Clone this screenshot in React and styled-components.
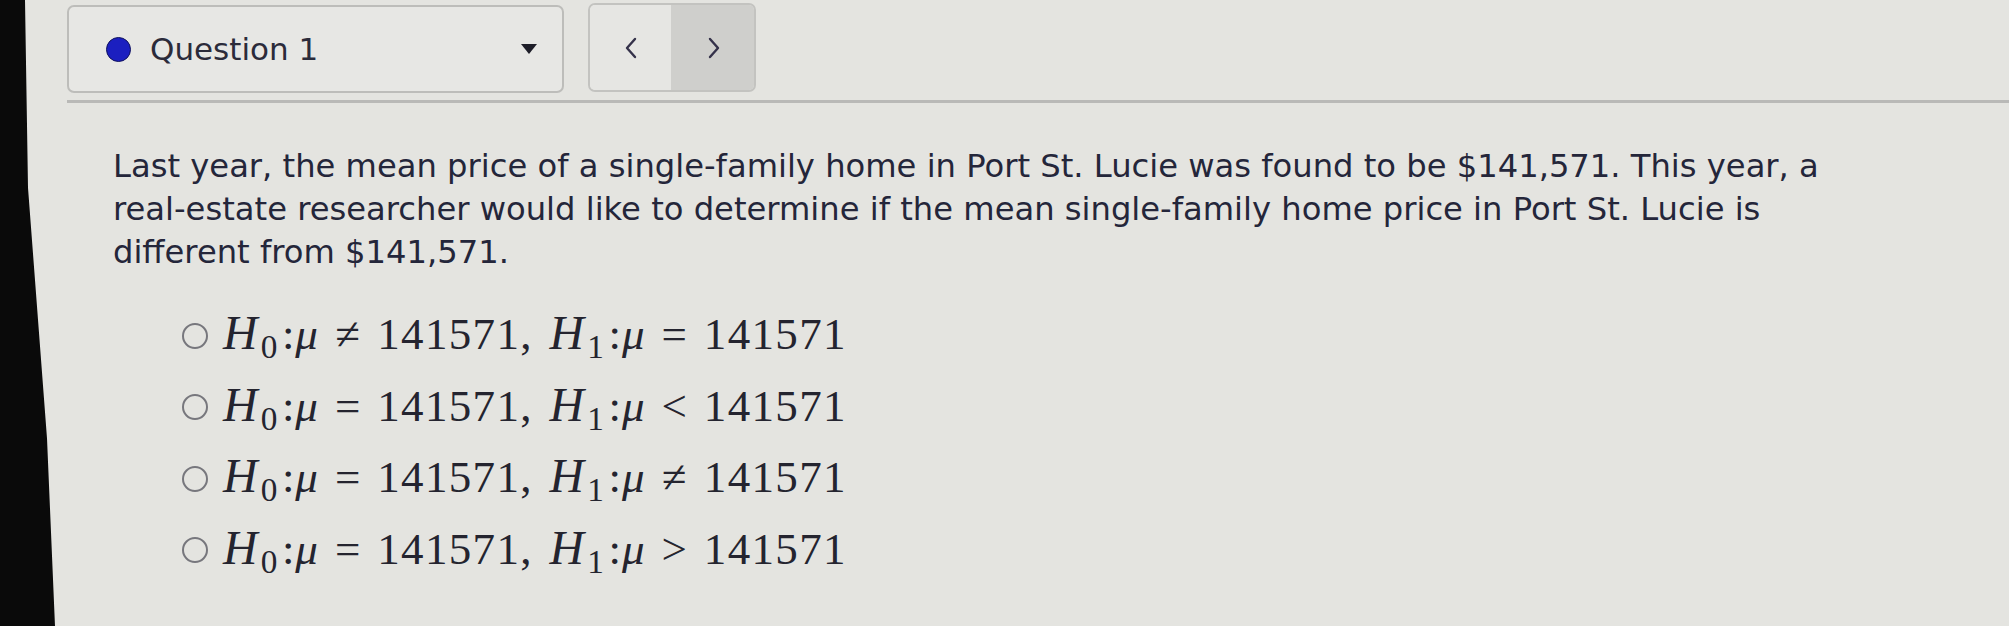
import React from "react";
import styled, { createGlobalStyle } from "styled-components";

const Global = createGlobalStyle`
  html, body { margin: 0; padding: 0; background: #e4e4e0; }
  #root { width: 2009px; height: 626px; }
`;

const Screen = styled.div`
  display: flex;
  width: 2009px;
  height: 626px;
  overflow: hidden;
  background: #e4e4e0;
`;

const Bezel = styled.div`
  flex: 0 0 55px;
  background: #0a0a0a;
  clip-path: polygon(0 0, 25px 0, 28px 30%, 47px 70%, 55px 100%, 0 100%);
`;

const Main = styled.div`
  flex: 1;
  display: flex;
  flex-direction: column;
  padding-left: 12px;
`;

const Header = styled.div`
  display: flex;
  align-items: flex-start;
  gap: 24px;
  padding-top: 5px;
`;

const Dropdown = styled.div`
  box-sizing: border-box;
  width: 497px;
  height: 88px;
  border: 2px solid #bdbdba;
  border-radius: 7px;
  background: #e7e7e4;
  display: flex;
  align-items: center;
  padding: 0 24px 0 37px;
`;

const Dot = styled.span`
  width: 25px;
  height: 25px;
  border-radius: 50%;
  background: #1b1fc0;
  border: 1.5px solid #10125e;
  box-sizing: border-box;
  flex: none;
`;

const Title = styled.span`
  flex: 1;
  margin-left: 19px;
  font-family: "DejaVu Sans", sans-serif;
  font-size: 31px;
  color: #2b2b3a;
`;

const Nav = styled.div`
  box-sizing: border-box;
  display: flex;
  width: 168px;
  height: 89px;
  margin-top: -2px;
  border: 2px solid #c3c3c0;
  border-radius: 7px;
  overflow: hidden;
`;

const NavButton = styled.div`
  flex: 1;
  display: flex;
  align-items: center;
  justify-content: center;
  background: ${(p) => p.$bg};
  border-left: ${(p) => (p.$divider ? "2px solid #cfcfcc" : "none")};
`;

const Separator = styled.div`
  margin-top: 7px;
  border-top: 3px solid #b9b9b7;
`;

const Prompt = styled.p`
  margin: 42px 0 0 46px;
  font-family: "DejaVu Sans", sans-serif;
  font-size: 32.2px;
  line-height: 43px;
  color: #24263a;
  white-space: nowrap;
`;

const Options = styled.div`
  display: flex;
  flex-direction: column;
  margin: 26px 0 0 115px;
`;

const Option = styled.div`
  display: flex;
  align-items: center;
  height: 71.5px;
  gap: 15px;
`;

const Radio = styled.span`
  box-sizing: border-box;
  width: 26px;
  height: 26px;
  border-radius: 50%;
  border: 2px solid #77777d;
  flex: none;
`;

const MathLine = styled.span`
  font-family: "Liberation Serif", "DejaVu Serif", serif;
  font-size: 45px;
  color: #24242f;
  white-space: nowrap;
`;

const Var = styled.i`
  font-style: italic;
  font-size: ${(p) => p.$size || "1em"};
  margin-right: ${(p) => p.$mr || "0"};
`;

const Sub = styled.span`
  font-size: 0.74em;
  vertical-align: -0.28em;
`;

const Colon = styled.span`
  margin: 0 0.02em 0 0.1em;
`;

const Rel = styled.span`
  display: inline-block;
  width: 0.778em;
  text-align: center;
  margin: 0 0.27em;
`;

const Num = styled.span`
  letter-spacing: 0.03em;
`;

const Quad = styled.span`
  display: inline-block;
  width: 0.4em;
`;

function Hyp({ rel0, rel1 }) {
  return (
    <MathLine>
      <Var $size="1.06em" $mr="0.07em">H</Var>
      <Sub>0</Sub>
      <Colon>:</Colon>
      <Var>μ</Var>
      <Rel>{rel0}</Rel>
      <Num>141571</Num>,
      <Quad />
      <Var $size="1.06em" $mr="0.07em">H</Var>
      <Sub>1</Sub>
      <Colon>:</Colon>
      <Var>μ</Var>
      <Rel>{rel1}</Rel>
      <Num>141571</Num>
    </MathLine>
  );
}

const Chevron = ({ dir }) => (
  <svg width="14" height="24" viewBox="0 0 14 24">
    <polyline
      points={dir === "left" ? "11,3 3,12 11,21" : "3,3 11,12 3,21"}
      fill="none"
      stroke="#35324a"
      strokeWidth="2.4"
      strokeLinecap="round"
      strokeLinejoin="round"
    />
  </svg>
);

const Caret = () => (
  <svg width="18" height="12" viewBox="0 0 18 12">
    <polygon points="1,1 17,1 9,11" fill="#1e1e28" />
  </svg>
);

export default function App() {
  const options = [
    ["≠", "="],
    ["=", "<"],
    ["=", "≠"],
    ["=", ">"],
  ];
  return (
    <>
      <Global />
      <Screen>
        <Bezel />
        <Main>
          <Header>
            <Dropdown>
              <Dot />
              <Title>Question 1</Title>
              <Caret />
            </Dropdown>
            <Nav>
              <NavButton $bg="#e6e6e3">
                <Chevron dir="left" />
              </NavButton>
              <NavButton $bg="#cfcfcc" $divider>
                <Chevron dir="right" />
              </NavButton>
            </Nav>
          </Header>
          <Separator />
          <Prompt>
            Last year, the mean price of a single-family home in Port St. Lucie was found to be $141,571. This year, a
            <br />
            real-estate researcher would like to determine if the mean single-family home price in Port St. Lucie is
            <br />
            different from $141,571.
          </Prompt>
          <Options>
            {options.map(([a, b], i) => (
              <Option key={i}>
                <Radio />
                <Hyp rel0={a} rel1={b} />
              </Option>
            ))}
          </Options>
        </Main>
      </Screen>
    </>
  );
}
